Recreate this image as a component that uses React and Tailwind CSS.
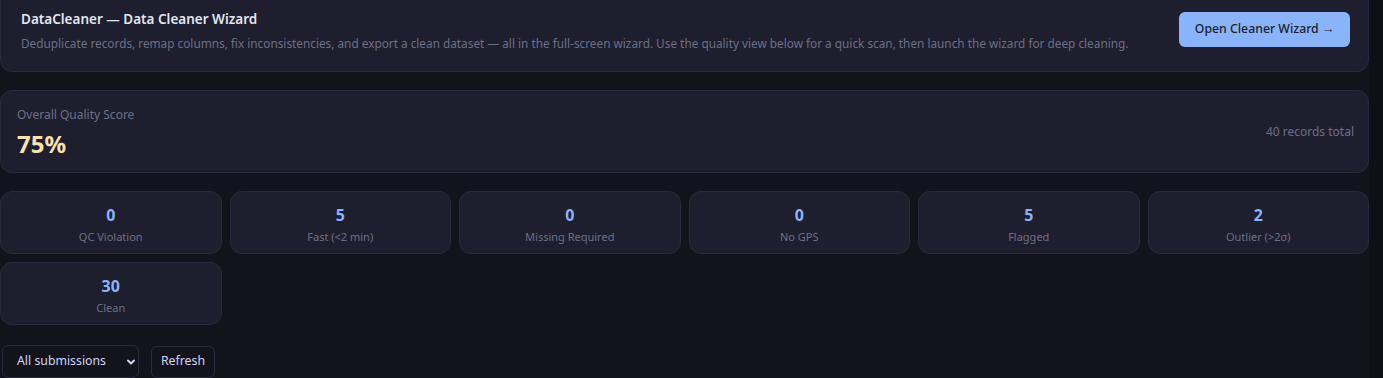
const stats = [
  { value: 0, label: 'QC Violation' },
  { value: 5, label: 'Fast (<2 min)' },
  { value: 0, label: 'Missing Required' },
  { value: 0, label: 'No GPS' },
  { value: 5, label: 'Flagged' },
  { value: 2, label: 'Outlier (>2σ)' },
  { value: 30, label: 'Clean' },
];

export default function App() {
  return (
    <div className="flex h-[378px] overflow-hidden bg-[#13131c] font-['Noto_Sans',sans-serif]">
      <div className="w-[1369px] shrink-0">
        {/* Wizard banner */}
        <div className="-mt-3 flex items-start justify-between rounded-xl border border-[#2a2a3c] bg-[#1e1e2e] px-5 pb-[17px] pt-5">
          <div>
            <h2 className="text-[13.5px] font-semibold leading-5 text-[#e2e6f3]">
              DataCleaner — Data Cleaner Wizard
            </h2>
            <p className="mt-[4px] pb-[1px] text-[11.8px] leading-5 text-[#6c7086]">
              Deduplicate records, remap columns, fix inconsistencies, and export a clean dataset — all in the full-screen wizard. Use the quality view below for a quick scan, then launch the wizard for deep cleaning.
            </p>
          </div>
          <button className="mr-[-2px] mt-[3px] h-[35px] w-[171px] rounded-md bg-[#89b4fa] text-[12.3px] font-medium text-[#1e1e2e]">
            Open Cleaner Wizard →
          </button>
        </div>

        {/* Quality score */}
        <div className="mt-[18px] flex h-[83px] items-center justify-between rounded-xl border border-[#2a2a3c] bg-[#1e1e2e] pl-4 pr-[14px]">
          <div className="pt-[3px]">
            <p className="text-[12px] leading-4 text-[#6c7086]">Overall Quality Score</p>
            <p className="mt-[5px] text-[24px] font-bold leading-8 text-[#f9e2af]">75%</p>
          </div>
          <p className="text-[12px] text-[#6c7086]">40 records total</p>
        </div>

        {/* Stat tiles */}
        <div className="mt-[18px] grid grid-cols-6 gap-2">
          {stats.map((s) => (
            <div
              key={s.label}
              className="flex h-[63px] flex-col items-center justify-center rounded-xl border border-[#2a2a3c] bg-[#1e1e2e] pt-[4px]"
            >
              <span className="text-[16px] font-bold leading-5 text-[#89b4fa]">{s.value}</span>
              <span className="mt-[4px] text-[11px] leading-4 text-[#6c7086]">{s.label}</span>
            </div>
          ))}
        </div>

        {/* Filters */}
        <div className="mt-[20px] flex items-center gap-3 pl-[2px]">
          <div className="relative">
            <select className="h-[33px] w-[137px] appearance-none rounded-md border border-[#2a2a3c] bg-[#13131c] pl-[14px] text-[12.3px] text-[#cdd6f4] outline-none">
              <option>All submissions</option>
            </select>
            <svg
              className="pointer-events-none absolute right-[3px] top-[12px] h-[10px] w-[10px] text-[#cdd6f4]"
              viewBox="0 0 10 10"
              fill="none"
              stroke="currentColor"
              strokeWidth="2"
              strokeLinecap="round"
              strokeLinejoin="round"
            >
              <path d="M2 3.5l3 3 3-3" />
            </svg>
          </div>
          <button className="h-[32px] w-[64px] rounded-md border border-[#2a2a3c] bg-[#13131c] text-[12.3px] text-[#cdd6f4]">
            Refresh
          </button>
        </div>
      </div>
      <div className="flex-1 bg-[#0f0f16]" />
    </div>
  );
}
